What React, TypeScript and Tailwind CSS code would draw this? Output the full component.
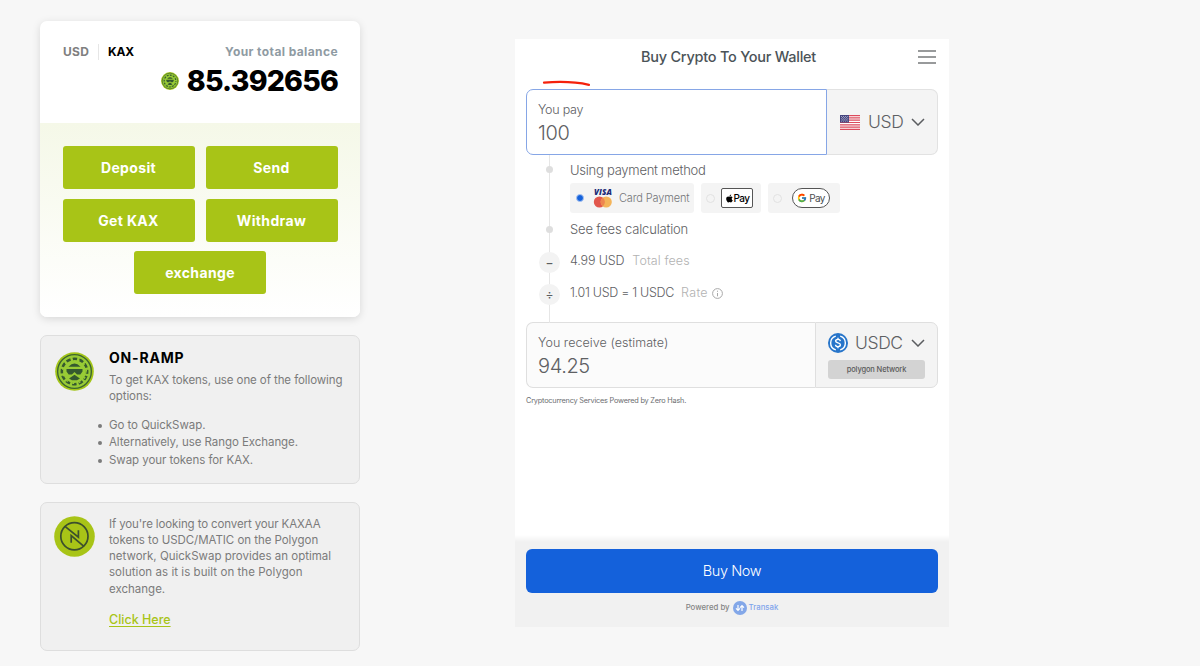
import React from "react";
import { FaApple } from "react-icons/fa";
import { FcGoogle } from "react-icons/fc";

const KaxLogo = ({ className }: { className: string }) => (
  <svg viewBox="0 0 40 40" className={className}>
    <circle cx="20" cy="20" r="19.8" fill="#a3c519" />
    <circle cx="20" cy="20" r="17.3" fill="#98cb35" stroke="#3d652f" strokeWidth="1.4" />
    <circle
      cx="20"
      cy="20"
      r="13"
      fill="none"
      stroke="#35592f"
      strokeWidth="2.6"
      strokeDasharray="4.6 2.21"
      strokeDashoffset="2.3"
    />
    <circle
      cx="20"
      cy="20"
      r="12.2"
      fill="none"
      stroke="#98cb35"
      strokeWidth="1.4"
      strokeDasharray="2 4.81"
      strokeDashoffset="1"
    />
    <path d="M13.8 15Q20 8.6 26.2 15Z" fill="#35592f" />
    <path d="M11.8 17.4H28.2V20L26 23H22.6L20 20.4L17.4 23H14L11.8 20Z" fill="#35592f" />
    <path d="M14.4 27.2L20 23.4L25.6 27.2L22.6 29H17.4Z" fill="#35592f" />
  </svg>
);

const SwapLogo = () => (
  <svg viewBox="0 0 41 41" className="w-[41px] h-[41px]">
    <circle cx="20.5" cy="20.5" r="20.3" fill="#a8c417" />
    <g fill="none" stroke="#3c4f2d" strokeWidth="1.7">
      <circle cx="20.4" cy="20.3" r="13.6" />
      <path d="M11 10.3L24.4 21.2V14.2M29.6 30.2L17.2 19.6V26.8" />
    </g>
  </svg>
);

const Flag = () => (
  <svg viewBox="0 0 20 15" className="w-[20px] h-[15px]">
    <rect width="20" height="15" fill="#fff" />
    <path
      d="M0 .6H20M0 2.9H20M0 5.2H20M0 7.5H20M0 9.8H20M0 12.1H20M0 14.4H20"
      stroke="#dc4b5c"
      strokeWidth="1.2"
    />
    <rect width="9" height="7.6" fill="#46467f" />
    <path d="M1 1.5H8.5M1 3.8H8.5M1 6.1H8.5" stroke="#c9c9e0" strokeWidth=".8" strokeDasharray=".9 1.2" />
    <path d="M2 2.6H8M2 4.9H8" stroke="#c9c9e0" strokeWidth=".8" strokeDasharray=".9 1.2" />
  </svg>
);

const UsdcLogo = () => (
  <svg viewBox="0 0 20 20" className="w-[20px] h-[20px]">
    <circle cx="10" cy="10" r="10" fill="#2775ca" />
    <g fill="none" stroke="#fff" strokeWidth="1.4">
      <path d="M7.8 3.1A7.2 7.2 0 0 0 7.8 16.9M12.2 3.1A7.2 7.2 0 0 1 12.2 16.9" />
      <path d="M12.4 8.2C12.2 6.9 11.3 6.4 10 6.4C8.6 6.4 7.6 7 7.6 8.1C7.6 10.5 12.4 9.2 12.4 11.8C12.4 13 11.4 13.6 10 13.6C8.5 13.6 7.6 12.9 7.5 11.7M10 4.8V6.4M10 13.6V15.2" />
    </g>
  </svg>
);

const Chevron = () => (
  <svg viewBox="0 0 14 8" className="w-[14px] h-[8px]">
    <path d="M1 1L7 7L13 1" fill="none" stroke="#5b5d60" strokeWidth="1.5" />
  </svg>
);

const CardLogos = () => (
  <div className="w-[22px] text-center">
    <div className="h-[8px] whitespace-nowrap font-['Open_Sans',sans-serif] text-[8px] font-extrabold italic leading-[8px] tracking-[0.1px] text-[#1a2a77]">
      VISA
    </div>
    <svg viewBox="0 0 22 12" className="h-[12px] w-[22px]">
      <circle cx="7.4" cy="6" r="5.6" fill="#e2574c" />
      <circle cx="14.2" cy="6" r="5.6" fill="#f4b459" />
      <path d="M10.8 1.6A5.6 5.6 0 0 1 10.8 10.4A5.6 5.6 0 0 1 10.8 1.6Z" fill="#ee8650" />
    </svg>
  </div>
);

const actionClass =
  "h-[43px] rounded-[3px] bg-[#a8c417] text-center text-[14px] font-bold leading-[43px] tracking-[0.35px] text-white";

const BalanceCard = () => (
  <div className="h-[296px] overflow-visible rounded-[7px] bg-white shadow-[0_2px_9px_rgba(0,0,0,0.13)]">
    <div className="h-[102px] px-[22px] pt-[22px]">
      <div className="flex h-[18px] items-center text-[12px] font-bold leading-[18px]">
        <span className="w-[37px] border-r border-[#e6e6e6] pl-px text-[#808080] leading-[16px] tracking-[0.3px]">USD</span>
        <span className="ml-[9px] tracking-[-0.2px] text-black">KAX</span>
        <span className="ml-auto tracking-[0.4px] text-[#8f9ba3]">Your total balance</span>
      </div>
      <div className="mt-px flex h-[38px] items-center justify-end">
        <KaxLogo className="w-[18px] h-[18px] mr-[8px]" />
        <span className="text-[28.5px] font-extrabold leading-[38px] tracking-[-0.8px] text-black">85.392656</span>
      </div>
    </div>
    <div className="h-[194px] rounded-b-[7px] bg-linear-to-b from-[#f5f8e8] to-white px-[22.5px] pt-[23px]">
      <div className="grid grid-cols-2 gap-x-[11px] gap-y-[9.5px]">
        <button className={actionClass}>Deposit</button>
        <button className={actionClass}>Send</button>
        <button className={actionClass}>Get KAX</button>
        <button className={actionClass}>Withdraw</button>
        <button className={actionClass + " col-span-2 w-[132px] justify-self-center"}>exchange</button>
      </div>
    </div>
  </div>
);

const OnRampCard = () => (
  <div className="mt-[18px] flex h-[149px] rounded-[7px] border border-[#dedede] bg-[#f0f0f0] pl-[14px] pt-[13px]">
    <KaxLogo className="mt-[3px] h-[39px] w-[39px] shrink-0" />
    <div className="ml-[15px] text-[11.5px] text-[#7b7b7b]">
      <h2 className="text-[14px] font-bold leading-[18px] tracking-[0.8px] text-black">ON-RAMP</h2>
      <p className="mt-[5px] whitespace-nowrap leading-[16px] tracking-[-0.09px]">
        To get KAX tokens, use one of the following
        <br />
        options:
      </p>
      <ul className="mt-[13px] list-none leading-[17.4px] tracking-[-0.06px]">
        {["Go to QuickSwap.", "Alternatively, use Rango Exchange.", "Swap your tokens for KAX."].map((item) => (
          <li key={item} className="-ml-[11px] flex items-center whitespace-nowrap">
            <i className="mr-[7px] h-[4px] w-[4px] rounded-full bg-[#7b7b7b]" />
            {item}
          </li>
        ))}
      </ul>
    </div>
  </div>
);

const SwapCard = () => (
  <div className="mt-[17.5px] flex h-[149.5px] rounded-[7px] border border-[#dedede] bg-[#f0f0f0] pl-[13px] pt-[13px]">
    <SwapLogo />
    <div className="ml-[14px] whitespace-nowrap text-[11.5px] leading-[16.3px] text-[#7b7b7b]">
      <p>
        <span className="tracking-[-0.12px]">If you're looking to convert your KAXAA</span>
        <br />
        <span className="tracking-[-0.05px]">tokens to USDC/MATIC on the Polygon</span>
        <br />
        network, QuickSwap provides an optimal
        <br />
        <span className="tracking-[0.05px]">solution as it is built on the Polygon</span>
        <br />
        exchange.
      </p>
      <a className="mt-[14px] inline-block text-[12.5px] font-medium leading-[18px] text-[#a8c417] underline underline-offset-2">
        Click Here
      </a>
    </div>
  </div>
);

const Radio = () => <i className="h-[9px] w-[9px] rounded-full border border-[#e2e2e2]" />;

const PaymentMethods = () => (
  <div className="ml-[44px] flex h-[30px] gap-[7px]">
    <div className="flex w-[124px] items-center rounded-[3px] bg-[#f4f4f4] pl-[6px]">
      <i className="h-[8px] w-[8px] rounded-full border border-[#a9c4f2] bg-[#1461db]" />
      <span className="ml-[8px]">
        <CardLogos />
      </span>
      <span className="ml-[5px] whitespace-nowrap text-[11px] tracking-[-0.15px] text-[#75777a]">Card Payment</span>
    </div>
    <div className="flex w-[60px] items-center rounded-[3px] bg-[#f4f4f4] pl-[5px]">
      <Radio />
      <span className="ml-[6px] flex h-[20px] w-[32px] items-center justify-center rounded-[2px] border border-[#555] bg-white text-[10px] font-medium tracking-[-0.6px] text-black">
        <FaApple size={9} />
        Pay
      </span>
    </div>
    <div className="flex w-[72px] items-center rounded-[3px] bg-[#f4f4f4] pl-[5px]">
      <Radio />
      <span className="ml-[10px] flex h-[20px] w-[38px] items-center justify-center gap-[2px] rounded-full border border-[#555] bg-white text-[10px] font-normal tracking-[-0.6px] text-[#4b4d50]">
        <FcGoogle size={10} />
        Pay
      </span>
    </div>
  </div>
);

const Sign = ({ children }: { children: React.ReactNode }) => (
  <span className="flex h-[21px] w-[21px] items-center justify-center rounded-full bg-[#f3f3f3] text-[12px] font-medium text-[#5b5d60]">
    {children}
  </span>
);

const Timeline = () => (
  <div className="relative h-[168px] text-[13px] text-[#5e6063]">
    <div className="absolute left-[23px] top-0 h-full w-px bg-[#e6e6e6]" />
    <div className="relative">
      <div className="flex h-[28px] items-center">
        <i className="ml-[20px] mr-[17px] h-[7px] w-[7px] rounded-full bg-[#dedede]" />
        <span className="mt-[4px] tracking-[-0.25px]">Using payment method</span>
      </div>
      <PaymentMethods />
      <div className="flex h-[32px] items-center">
        <i className="ml-[20px] mr-[17px] h-[7px] w-[7px] rounded-full bg-[#dedede]" />
        <span className="mt-px tracking-[-0.17px]">See fees calculation</span>
      </div>
      <div className="flex h-[32px] items-center text-[12.5px]">
        <span className="ml-[13px] mr-[10px] mt-[3px]">
          <Sign>−</Sign>
        </span>
        <span className="tracking-[-0.15px]">4.99 USD</span>
        <span className="ml-[8px] tracking-[0.1px] text-[#b2b2b2]">Total fees</span>
      </div>
      <div className="flex h-[32px] items-center text-[12.5px]">
        <span className="ml-[13px] mr-[10px] mt-[3px]">
          <Sign>÷</Sign>
        </span>
        <span className="tracking-[-0.3px]">1.01 USD = 1 USDC</span>
        <span className="ml-[7px] tracking-[0.3px] text-[#b2b2b2]">Rate</span>
        <svg viewBox="0 0 11 11" className="ml-[4px] h-[11px] w-[11px]" fill="none" stroke="#a8a8a8">
          <circle cx="5.5" cy="5.5" r="4.9" />
          <path d="M5.5 5V8.3M5.5 2.7V3.8" />
        </svg>
      </div>
    </div>
  </div>
);

const Widget = () => (
  <div className="ml-[155px] mt-[18px] flex h-[588px] w-[434px] flex-col bg-white px-[11px] font-light">
    <div className="relative flex h-[50px] shrink-0 justify-center">
      <h1 className="mr-[7px] mt-[7px] text-[14.5px] font-medium leading-[22px] tracking-[-0.24px] text-[#4b5358]">
        Buy Crypto To Your Wallet
      </h1>
      <svg
        viewBox="0 0 18 14"
        className="absolute right-[2px] top-[11px] h-[14px] w-[18px]"
        stroke="#77797b"
        strokeWidth="1.6"
      >
        <path d="M0 1H18M0 7H18M0 13H18" />
      </svg>
      <svg viewBox="0 0 50 8" className="absolute left-[16px] top-[40px] h-[8px] w-[50px]" fill="none">
        <path d="M2 3.7Q27 1.5 47 5.8" stroke="#f5210b" strokeWidth="2.2" strokeLinecap="round" />
      </svg>
    </div>

    <div className="flex h-[66px] shrink-0">
      <div className="w-[301px] rounded-l-[7px] border border-[#86a6e6] pl-[11px] pt-[11px] text-[#5e6063]">
        <div className="text-[12.5px] leading-[18px] tracking-[-0.25px]">You pay</div>
        <div className="text-[20px] leading-[28px] tracking-[-0.4px]">100</div>
      </div>
      <div className="flex flex-1 items-center rounded-r-[7px] border border-l-0 border-[#e2e2e2] bg-[#f4f4f4] pl-[13px]">
        <Flag />
        <span className="ml-[8px] mr-[8px] text-[17.5px] tracking-[-0.4px] text-[#5e6063]">USD</span>
        <Chevron />
      </div>
    </div>

    <Timeline />

    <div className="-mt-px flex h-[66px] shrink-0">
      <div className="w-[289px] rounded-l-[7px] border border-r-0 border-[#dfdfdf] bg-[#fbfbfb] pl-[11px] pt-[11px] text-[#5e6063]">
        <div className="text-[12.5px] leading-[18px] tracking-[0.05px]">You receive (estimate)</div>
        <div className="text-[20px] leading-[28px] tracking-[-0.4px]">94.25</div>
      </div>
      <div className="flex-1 rounded-r-[7px] border border-[#dfdfdf] bg-[#f4f4f4] pl-[12px] pt-[10px]">
        <div className="flex h-[20px] items-center">
          <UsdcLogo />
          <span className="ml-[7px] mr-[8px] text-[17.5px] tracking-[-0.4px] text-[#5e6063]">USDC</span>
          <Chevron />
        </div>
        <div className="mt-[7px] h-[19px] w-[97px] rounded-[3px] bg-[#d3d3d3] text-center text-[7.5px] font-medium leading-[19px] tracking-[-0.13px] text-[#5b5b5b]">
          polygon Network
        </div>
      </div>
    </div>
    <div className="mt-[7px] text-[7.3px] font-normal leading-[12px] tracking-[-0.19px] text-[#6b6d70]">
      Cryptocurrency Services Powered by Zero Hash.
    </div>

    <div className="-mx-[11px] mt-auto h-[92px] shrink-0 bg-linear-to-b from-white to-[#f1f1f1] to-[7px] px-[11px] pt-[14px]">
      <button className="h-[44px] w-full rounded-[6px] bg-[#1461db] text-[14.5px] tracking-[-0.4px] text-white">
        Buy Now
      </button>
      <div className="mt-[8px] flex h-[14px] items-center justify-center text-[7.8px] font-medium text-[#858585]">
        Powered by
        <svg viewBox="0 0 14 14" className="ml-[3px] mr-[2px] h-[14px] w-[14px]">
          <circle cx="7" cy="7" r="7" fill="#83a7e8" />
          <path
            d="M5 4V9M3 7.3L5 9.3L7 7.3M9 10V5M7 6.7L9 4.7L11 6.7"
            fill="none"
            stroke="#fff"
            strokeWidth="1.2"
          />
        </svg>
        <span className="text-[#7fa4ec]">Transak</span>
      </div>
    </div>
  </div>
);

const App = () => {
  return (
    <div className="flex h-[666px] w-[1200px] items-start overflow-hidden bg-[#f7f7f7] pl-[40px] pt-[21px] font-['Inter',sans-serif]">
      <div className="w-[320px] shrink-0">
        <BalanceCard />
        <OnRampCard />
        <SwapCard />
      </div>
      <Widget />
    </div>
  );
};

export default App;
